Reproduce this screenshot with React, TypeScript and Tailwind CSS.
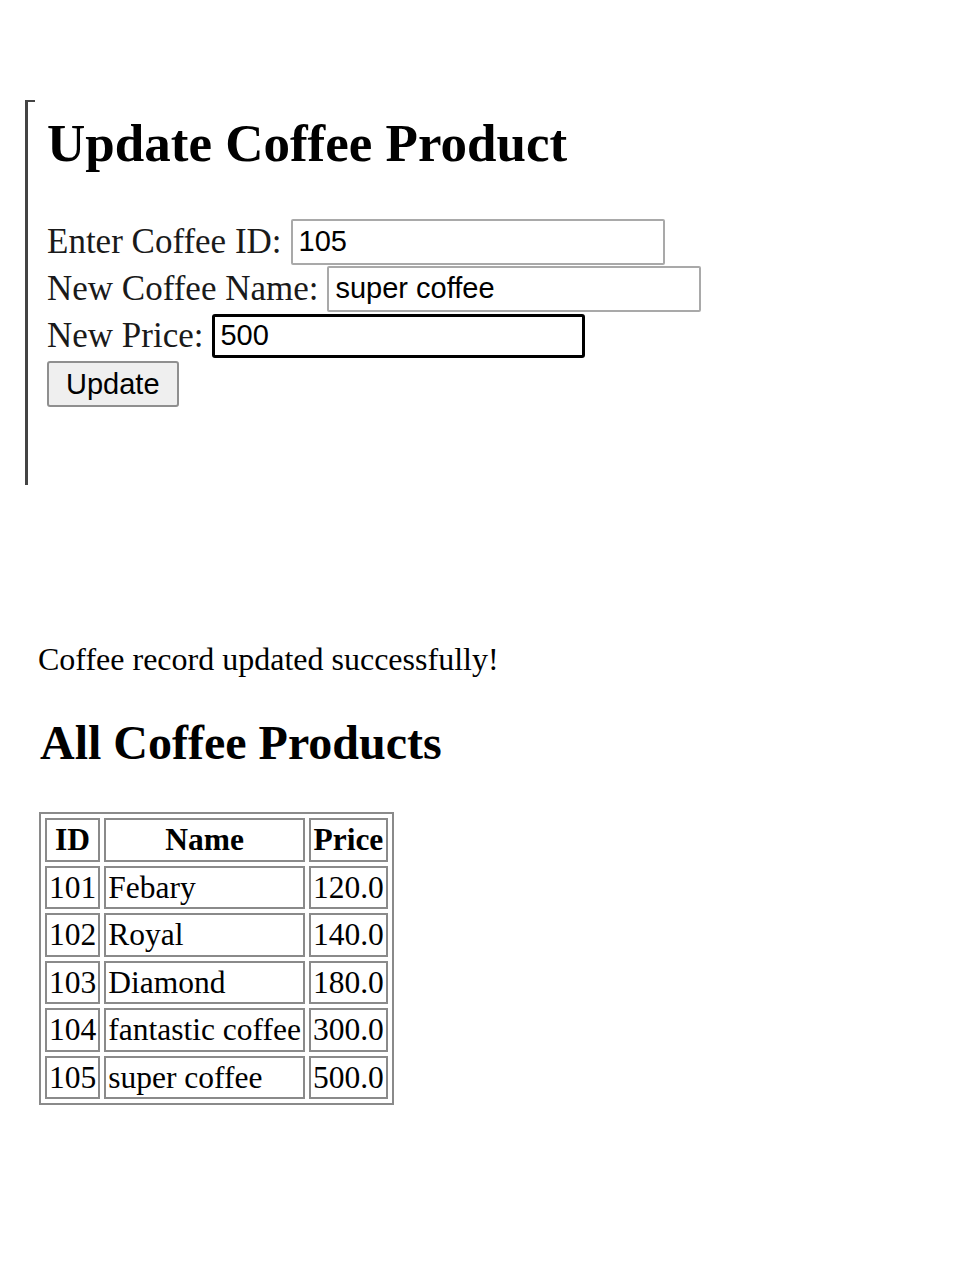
const coffees = [
  { id: 101, name: "Febary", price: "120.0" },
  { id: 102, name: "Royal", price: "140.0" },
  { id: 103, name: "Diamond", price: "180.0" },
  { id: 104, name: "fantastic coffee", price: "300.0" },
  { id: 105, name: "super coffee", price: "500.0" },
];

const serif = "font-['Liberation_Serif','Times_New_Roman',serif]";
const sans = "font-['Liberation_Sans',Arial,sans-serif]";

function Field({
  label,
  value,
  focused,
}: {
  label: string;
  value: string;
  focused?: boolean;
}) {
  return (
    <div className="flex h-[47px] items-center gap-[9px]">
      <span className="text-[35px] leading-[40px] text-[#1a1a1a]">{label}</span>
      <input
        type="text"
        defaultValue={value}
        className={
          focused
            ? `h-[44px] w-[373px] rounded-[3px] border-[3px] border-black bg-white px-[5px] text-[29px] text-black outline-none ${sans}`
            : `h-[46px] w-[374px] rounded-[2px] border-2 border-[#a9a9a9] bg-white px-[6px] text-[29px] text-black outline-none ${sans}`
        }
      />
    </div>
  );
}

export default function App() {
  return (
    <div className={`min-h-[1280px] bg-white pt-[100px] text-black ${serif}`}>
      {/* framed update form */}
      <div className="ml-[25px] flex h-[385px] flex-col border-l-[3px] border-[#444]">
        <div className="h-[2px] w-[7px] bg-[#444]" />
        <div className="pl-[19px]">
          <h2 className="mt-[15px] mb-[48px] text-[53px] font-bold leading-none">
            Update Coffee Product
          </h2>
          <Field label="Enter Coffee ID:" value="105" />
          <Field label="New Coffee Name:" value="super coffee" />
          <Field label="New Price:" value="500" focused />
          <button
            type="button"
            className={`mt-[2px] h-[46px] rounded-[3px] border-2 border-[#8f8f8f] bg-[#efefef] px-[17px] text-[29px] text-black ${sans}`}
          >
            Update
          </button>
        </div>
      </div>

      <div className="pl-[38px]">
        <p className="mt-[156px] text-[32px] leading-[36px]">
          Coffee record updated successfully!
        </p>
        <h2 className="mt-[42px] pl-[2px] text-[48px] font-bold leading-none">
          All Coffee Products
        </h2>
        <table className="mt-[45px] ml-[1px] border-separate border-spacing-[4px] border-2 border-[#8a8a8a] text-[31.5px] leading-[35.5px]">
          <thead>
            <tr>
              <th className="border-2 border-[#8a8a8a] p-[2px] font-bold">ID</th>
              <th className="border-2 border-[#8a8a8a] p-[2px] font-bold">Name</th>
              <th className="border-2 border-[#8a8a8a] p-[2px] font-bold">Price</th>
            </tr>
          </thead>
          <tbody>
            {coffees.map((c) => (
              <tr key={c.id}>
                <td className="border-2 border-[#8a8a8a] p-[2px]">{c.id}</td>
                <td className="border-2 border-[#8a8a8a] p-[2px]">{c.name}</td>
                <td className="border-2 border-[#8a8a8a] p-[2px]">{c.price}</td>
              </tr>
            ))}
          </tbody>
        </table>
      </div>
    </div>
  );
}
